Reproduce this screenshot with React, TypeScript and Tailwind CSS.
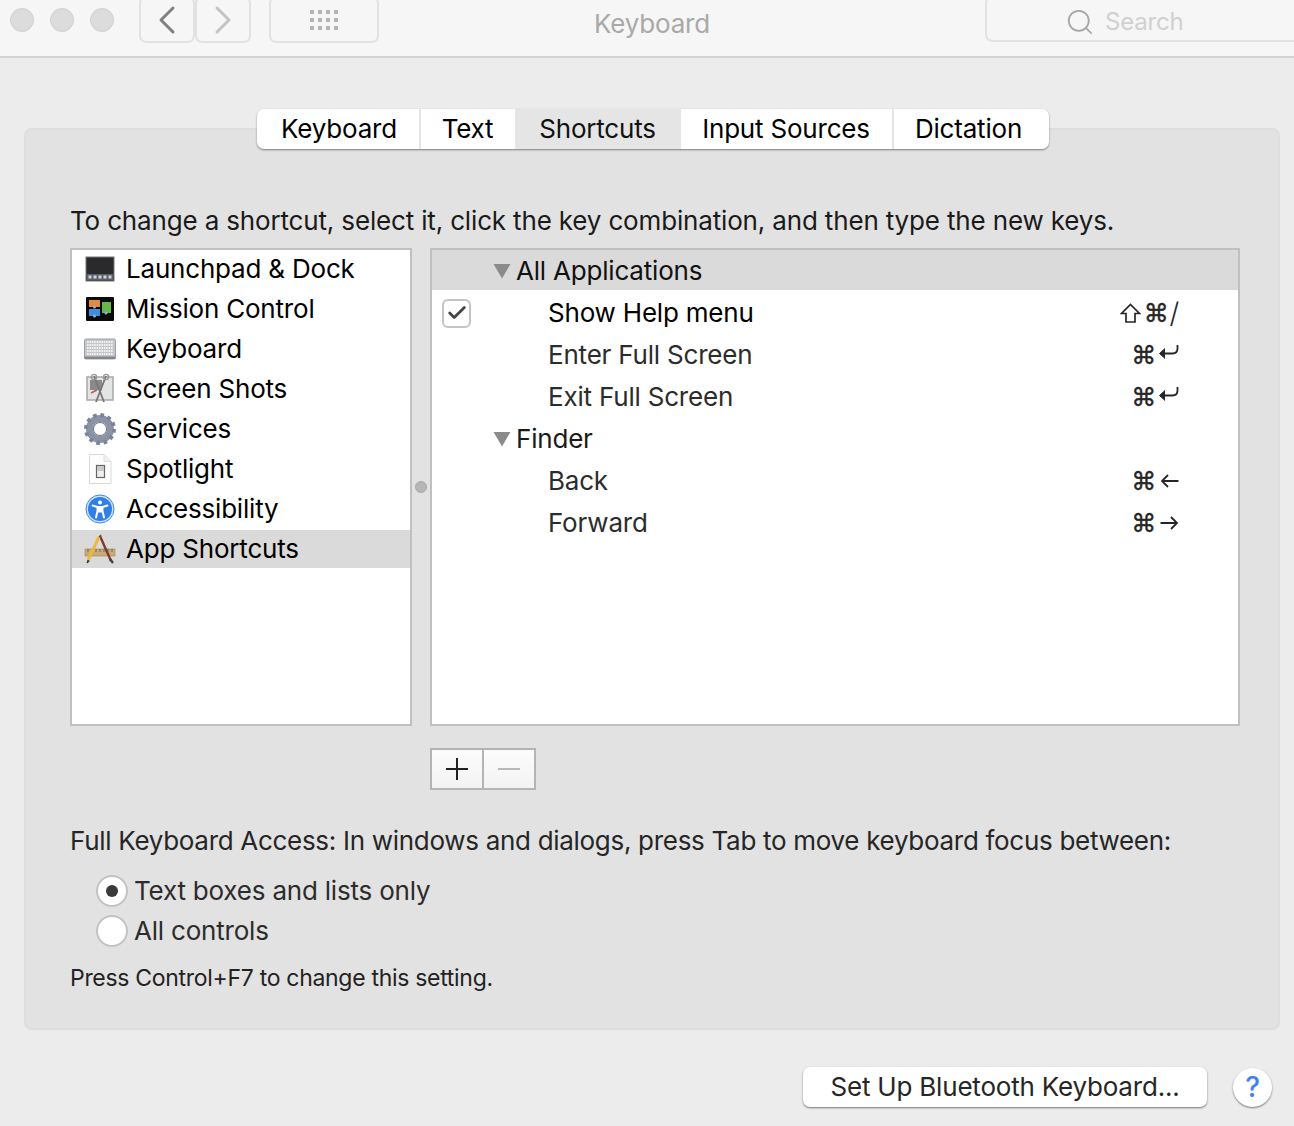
import React from 'react';
import { Check, ChevronLeft, ChevronRight, Search } from 'lucide-react';

const tabs = [
  { label: 'Keyboard', width: 'w-[162px] pl-[3px]', active: false },
  { label: 'Text', width: 'w-[96px]', active: false },
  { label: 'Shortcuts', width: 'w-[166px]', active: true },
  { label: 'Input Sources', width: 'w-[211px]', active: false },
  { label: 'Dictation', width: 'w-[157px] pr-[5px]', active: false },
];

const LaunchpadIcon = () => (
  <svg width="30" height="26" viewBox="0 0 30 26">
    <rect x="1" y="1" width="28" height="24" fill="#2a2a2c" stroke="#777" strokeWidth="1" />
    <rect x="2" y="18" width="26" height="6" fill="#5c6066" />
    {[5, 10, 15, 20, 25].map((x) => (
      <rect key={x} x={x - 1.5} y="19.5" width="3" height="3" fill="#c9d4e2" />
    ))}
  </svg>
);

const MissionIcon = () => (
  <svg width="30" height="26" viewBox="0 0 30 26">
    <rect x="1" y="1" width="28" height="24" rx="1" fill="#0a0a0a" />
    <rect x="4" y="4" width="11" height="7" fill="#e08a3c" />
    <rect x="4" y="13" width="11" height="7" fill="#3c8fdc" />
    <rect x="17" y="6" width="9" height="11" fill="#66b84a" />
    <circle cx="9.5" cy="11" r="1.5" fill="#9ad" />
    <circle cx="9.5" cy="20" r="1.5" fill="#9ad" />
    <circle cx="21" cy="17" r="1.5" fill="#9ad" />
  </svg>
);

const KeyboardIcon = () => (
  <svg width="32" height="22" viewBox="0 0 32 22">
    <rect x="0.5" y="1" width="31" height="20" rx="1.5" fill="#c4c5c7" stroke="#a0a1a3" />
    <rect x="0.5" y="18.5" width="31" height="2.5" fill="#85868a" />
    {[4, 7, 10, 13, 16].map((y) => (
      <path key={y} d={`M3 ${y}H29`} stroke="#f2f2f2" strokeWidth="2" strokeDasharray="1.6 0.8" />
    ))}
  </svg>
);

const ScreenShotIcon = () => (
  <svg width="30" height="32" viewBox="0 0 30 32">
    <rect x="2" y="4" width="26" height="23" fill="#e4e4e4" stroke="#a8a8a8" strokeWidth="1.5" />
    <rect x="5" y="7" width="12" height="10" fill="#8a8a8a" />
    <path d="M9 3L19 29M21 3L11 29" stroke="#777" strokeWidth="1.8" />
    <circle cx="9" cy="4" r="2.6" fill="none" stroke="#999" strokeWidth="1.4" />
    <circle cx="21" cy="4" r="2.6" fill="none" stroke="#999" strokeWidth="1.4" />
    <path d="M6 20l6-3" stroke="#c55" strokeWidth="1.5" />
  </svg>
);

const GearIcon = () => (
  <svg width="32" height="32" viewBox="0 0 32 32">
    <circle cx="16" cy="16" r="10.5" fill="none" stroke="#8a94a6" strokeWidth="7" />
    <circle cx="16" cy="16" r="14" fill="none" stroke="#7a8496" strokeWidth="4" strokeDasharray="3.6 3.73" />
    <circle cx="16" cy="16" r="6.5" fill="#fff" stroke="#6a7280" strokeWidth="1" />
  </svg>
);

const SpotlightIcon = () => (
  <svg width="26" height="32" viewBox="0 0 26 32">
    <path d="M2.5 1.5H17L24 8.5V30.5H2.5Z" fill="#fdfdfd" stroke="#d8d8d8" />
    <path d="M17 1.5V8.5H24" fill="#f0f0f0" stroke="#dedede" />
    <rect x="9.5" y="12.5" width="8" height="12" fill="#eee" stroke="#666" strokeWidth="1.2" />
    <rect x="10" y="13" width="7" height="5" fill="#c9c9c9" />
  </svg>
);

const AccessibilityIcon = () => (
  <svg width="30" height="30" viewBox="0 0 30 30">
    <circle cx="15" cy="15" r="14" fill="#cfe3fb" stroke="#3d87e0" strokeWidth="1" />
    <circle cx="15" cy="15" r="12" fill="#2f7fe6" />
    <circle cx="15" cy="8.5" r="2" fill="#fff" />
    <path d="M7.5 11.5L12.5 13V17L11 23.5M22.5 11.5L17.5 13V17L19 23.5M12.5 13H17.5M12.5 17.5H17.5" stroke="#fff" strokeWidth="2" fill="none" strokeLinecap="round" />
    <rect x="12.5" y="12.5" width="5" height="5" fill="#fff" />
  </svg>
);

const AppShortcutsIcon = () => (
  <svg width="32" height="30" viewBox="0 0 32 30">
    <path d="M1 15H31V22H1Z" fill="#c8ab78" stroke="#9c8457" strokeWidth="0.6" />
    <path d="M4 15v3M8 15v3M12 15v3M16 15v3M20 15v3M24 15v3M28 15v3" stroke="#6f5c3a" strokeWidth="0.8" />
    <path d="M16 2L27 27" stroke="#7d3b2c" strokeWidth="2.4" />
    <path d="M26 25L29 29" stroke="#444" strokeWidth="2.4" />
    <path d="M15 3L4 26" stroke="#eab93f" strokeWidth="3" />
    <path d="M4 26L3 29L5.5 27" fill="#333" stroke="#333" />
    <path d="M15 3L17 1" stroke="#555" strokeWidth="1.5" />
  </svg>
);

const categories = [
  { label: 'Launchpad & Dock', icon: <LaunchpadIcon /> },
  { label: 'Mission Control', icon: <MissionIcon /> },
  { label: 'Keyboard', icon: <KeyboardIcon /> },
  { label: 'Screen Shots', icon: <ScreenShotIcon /> },
  { label: 'Services', icon: <GearIcon /> },
  { label: 'Spotlight', icon: <SpotlightIcon /> },
  { label: 'Accessibility', icon: <AccessibilityIcon /> },
  { label: 'App Shortcuts', icon: <AppShortcutsIcon />, selected: true },
];

// Disclosure triangle for the group rows
const Triangle = () => (
  <svg width="18" height="16" viewBox="0 0 18 16" className="ml-[61px] mr-[5px] shrink-0">
    <path d="M0.5 1H17.5L9 15.5Z" fill="#8b8b8b" />
  </svg>
);

// Modifier glyphs
const Cmd = () => (
  <span className="font-['DejaVu_Sans',sans-serif] text-[25px] [-webkit-text-stroke:0.4px_#262626]">⌘</span>
);

const ShiftKey = () => (
  <svg width="21" height="20" viewBox="0 0 21 20" className="mr-[3px]">
    <path d="M10.5 1.5L19.5 10.5H15V19H6V10.5H1.5Z" fill="none" stroke="#262626" strokeWidth="1.7" />
  </svg>
);

const ReturnKey = () => (
  <svg width="21" height="16" viewBox="0 0 21 16" className="ml-[2px] -mt-[4px]">
    <path d="M19.5 0V3.5Q19.5 8.5 14.5 8.5H3" fill="none" stroke="#262626" strokeWidth="1.8" />
    <path d="M7 3.5L1.5 8.5L7 13.5" fill="#262626" stroke="#262626" strokeWidth="1" />
  </svg>
);

const LeftKey = () => (
  <svg width="19" height="14" viewBox="0 0 19 14" className="ml-[4px]">
    <path d="M18.5 7H2M8 1L2 7L8 13" fill="none" stroke="#262626" strokeWidth="1.8" />
  </svg>
);

const RightKey = () => (
  <svg width="19" height="14" viewBox="0 0 19 14" className="ml-[4px]">
    <path d="M0.5 7H17M11 1L17 7L11 13" fill="none" stroke="#262626" strokeWidth="1.8" />
  </svg>
);

const ShortcutRow = ({ label, keys, checked }: { label: string; keys: React.ReactNode; checked?: boolean }) => (
  <div className="flex items-center h-[42px] pr-[59px]">
    <div className="w-[116px] pl-[10px] shrink-0">
      {checked && (
        <div className="w-[29px] h-[29px] rounded-[6px] border-2 border-[#c4c4c4] bg-white flex items-center justify-center">
          <Check size={22} strokeWidth={3} className="text-[#444]" />
        </div>
      )}
    </div>
    <span className={`flex-1 ${checked ? 'text-black' : 'text-[#2c2c2c]'}`}>{label}</span>
    <span className="flex items-center text-[#262626]">{keys}</span>
  </div>
);

const GroupRow = ({ label }: { label: string }) => (
  <div className="flex items-center h-[42px] text-[#1a1a1a]">
    <Triangle />
    <span>{label}</span>
  </div>
);

const Radio = ({ label, on }: { label: string; on?: boolean }) => (
  <div className="flex items-center h-[40px]">
    <div className="w-[32px] h-[32px] rounded-full bg-white border-2 border-[#c2c2c2] flex items-center justify-center shrink-0">
      {on && <div className="w-[12px] h-[12px] rounded-full bg-[#3a3a3a]" />}
    </div>
    <span className="ml-[6px] text-[#2c2c2c]">{label}</span>
  </div>
);

export default function App() {
  return (
    <div className="w-[1294px] h-[1126px] overflow-hidden bg-[#ececec] font-['Inter',sans-serif] text-[26px] tracking-[-0.2px] text-[#1a1a1a] leading-none">
      {/* Title bar */}
      <div className="h-[58px] bg-[#f6f6f6] border-b-2 border-[#d3d3d3] flex items-start overflow-hidden">
        <div className="flex gap-[16px] ml-[10px] mt-[8px] shrink-0">
          <div className="w-[24px] h-[24px] rounded-full bg-[#dcdcdc] border border-[#d0d0d0]" />
          <div className="w-[24px] h-[24px] rounded-full bg-[#dcdcdc] border border-[#d0d0d0]" />
          <div className="w-[24px] h-[24px] rounded-full bg-[#dcdcdc] border border-[#d0d0d0]" />
        </div>
        <div className="flex ml-[25px] -mt-[4px] shrink-0">
          <div className="w-[56px] h-[47px] rounded-[7px] border-2 border-[#e2e2e2] flex items-center justify-center">
            <ChevronLeft size={48} strokeWidth={1.5} className="text-[#808080] shrink-0" />
          </div>
          <div className="w-[56px] h-[47px] rounded-[7px] border-2 border-[#e2e2e2] flex items-center justify-center">
            <ChevronRight size={48} strokeWidth={1.5} className="text-[#c4c4c4] shrink-0" />
          </div>
        </div>
        <div className="w-[110px] h-[47px] -mt-[4px] ml-[18px] rounded-[7px] border-2 border-[#e2e2e2] flex items-center justify-center shrink-0">
          <div className="grid grid-cols-4 gap-[4px]">
            {Array.from({ length: 12 }).map((_, i) => (
              <div key={i} className="w-[4px] h-[4px] bg-[#b4b4b4]" />
            ))}
          </div>
        </div>
        <div className="w-[546px] text-center pt-[11px] text-[#a9a9a9] shrink-0">Keyboard</div>
        <div className="w-[330px] h-[46px] -mt-[4px] ml-[60px] rounded-[7px] border-2 border-[#e2e2e2] flex items-center pl-[78px] pt-[6px] shrink-0">
          <Search size={30} strokeWidth={1.4} className="text-[#a6a6a6] shrink-0" />
          <span className="ml-[10px] text-[24px] text-[#d0d0d0]">Search</span>
        </div>
      </div>

      {/* Tabbed panel */}
      <div className="ml-[24px] mt-[70px] w-[1256px] h-[902px] rounded-[8px] bg-[#e2e2e2] border-2 border-[#dedede]">
        <div className="flex justify-center -mt-[21px] ml-[1px]">
          <div className="flex h-[40px] rounded-[7px] overflow-hidden bg-white shadow-[0_1px_2px_rgba(0,0,0,0.45)] text-black">
            {tabs.map((tab, i) => (
              <div
                key={tab.label}
                className={`${tab.width} flex items-center justify-center ${tab.active ? 'bg-[#e5e5e5] text-[#111]' : ''} ${i > 0 && !tab.active && !tabs[i - 1].active ? 'border-l-2 border-[#e4e4e4]' : ''}`}
              >
                {tab.label}
              </div>
            ))}
          </div>
        </div>

        <div className="pl-[44px] pr-[38px]">
          <div className="mt-[59px] text-[#1a1a1a] h-[26px] whitespace-nowrap tracking-[-0.16px]">
            To change a shortcut, select it, click the key combination, and then type the new keys.
          </div>

          {/* Lists */}
          <div className="flex mt-[14px] h-[478px]">
            <div className="w-[342px] border-2 border-[#c0c0c0] bg-white text-black">
              {categories.map((c) => (
                <div key={c.label} className="h-[40px]">
                  <div className={`h-[38px] flex items-center ${c.selected ? 'bg-[#dadada]' : ''}`}>
                    <div className="w-[54px] flex justify-center shrink-0 pl-[1px]">{c.icon}</div>
                    <span>{c.label}</span>
                  </div>
                </div>
              ))}
            </div>
            <div className="w-[18px] flex items-center justify-center">
              <div className="w-[12px] h-[12px] rounded-full bg-[#b6b6b6] border border-[#a8a8a8]" />
            </div>
            <div className="w-[810px] border-2 border-[#c0c0c0] bg-white">
              <div className="h-[40px] mb-[2px] bg-[#dadada] flex items-center pt-[2px] text-[#111]">
                <Triangle />
                <span>All Applications</span>
              </div>
              <ShortcutRow label="Show Help menu" checked keys={<><ShiftKey /><Cmd /><span className="ml-[1px] text-[28px] font-light">/</span></>} />
              <ShortcutRow label="Enter Full Screen" keys={<><Cmd /><ReturnKey /></>} />
              <ShortcutRow label="Exit Full Screen" keys={<><Cmd /><ReturnKey /></>} />
              <GroupRow label="Finder" />
              <ShortcutRow label="Back" keys={<><Cmd /><LeftKey /></>} />
              <ShortcutRow label="Forward" keys={<><Cmd /><RightKey /></>} />
            </div>
          </div>

          {/* Add / remove */}
          <div className="ml-[360px] mt-[22px] w-[106px] h-[42px] flex border-2 border-[#b4b4b4]">
            <div className="w-[52px] border-r-2 border-[#b4b4b4] bg-gradient-to-b from-[#fcfcfc] to-[#f3f3f3] flex items-center justify-center">
              <div className="relative w-[22px] h-[22px]">
                <div className="absolute left-0 top-[10px] w-[22px] h-[2px] bg-[#222]" />
                <div className="absolute left-[10px] top-0 w-[2px] h-[22px] bg-[#222]" />
              </div>
            </div>
            <div className="flex-1 bg-gradient-to-b from-[#fcfcfc] to-[#f3f3f3] flex items-center justify-center">
              <div className="w-[22px] h-[2px] bg-[#b8b8b8]" />
            </div>
          </div>

          <div className="mt-[38px] h-[26px] text-[#262626] whitespace-nowrap tracking-[-0.3px]">
            Full Keyboard Access: In windows and dialogs, press Tab to move keyboard focus between:
          </div>
          <div className="ml-[26px] mt-[17px]">
            <Radio label="Text boxes and lists only" on />
            <Radio label="All controls" />
          </div>
          <div className="mt-[16px] text-[23px] text-[#222] tracking-[-0.3px]">Press Control+F7 to change this setting.</div>
        </div>
      </div>

      {/* Bottom buttons */}
      <div className="flex items-center mt-[37px] ml-[803px]">
        <div className="w-[404px] h-[40px] rounded-[7px] bg-white shadow-[0_1px_2px_rgba(0,0,0,0.5)] flex items-center justify-center text-[#262626]">
          Set Up Bluetooth Keyboard...
        </div>
        <div className="ml-[26px] w-[39px] h-[39px] rounded-full bg-white shadow-[0_1px_2px_rgba(0,0,0,0.5)] flex items-center justify-center text-[#3b82f6] text-[28px] font-medium">
          ?
        </div>
      </div>
    </div>
  );
}
